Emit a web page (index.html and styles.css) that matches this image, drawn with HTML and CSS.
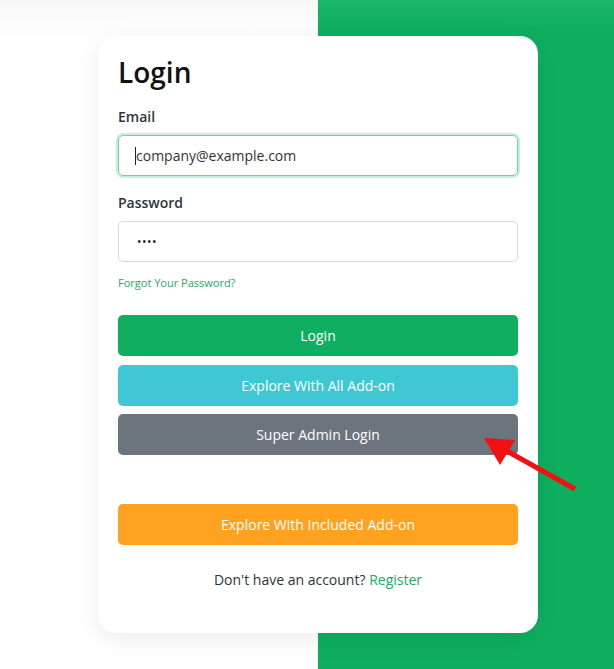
FILE: index.html
```html
<!DOCTYPE html>
<html>
<head>
<meta charset="utf-8">
<link rel="stylesheet" href="styles.css">
</head>
<body>
<div class="page">
  <div class="bg-left"></div>
  <div class="bg-right"></div>
  <div class="card">
    <h1 class="title">Login</h1>
    <label class="label">Email</label>
    <div class="input focus"><span class="caret"></span>company@example.com</div>
    <label class="label pw">Password</label>
    <div class="input dots">••••</div>
    <a class="forgot">Forgot Your Password?</a>
    <div class="buttons">
      <div class="btn green">Login</div>
      <div class="btn cyan">Explore With All Add-on</div>
      <div class="btn gray">Super Admin Login</div>
      <div class="btn orange">Explore With Included Add-on</div>
    </div>
    <p class="register">Don't have an account? <a>Register</a></p>
  </div>
  <svg class="arrow" width="614" height="669" viewBox="0 0 614 669">
    <line x1="575" y1="489" x2="505" y2="450" stroke="#f21010" stroke-width="5"/>
    <polygon points="484,438 515,440 500,465" fill="#f21010"/>
  </svg>
</div>
</body>
</html>
```
FILE: styles.css
```css
* { box-sizing: border-box; }
html, body { margin: 0; padding: 0; }
body { font-family: "Open Sans", "Noto Sans", sans-serif; }
.page { position: relative; width: 614px; height: 669px; overflow: hidden; display: flex; }
.bg-left { width: 318px; background: linear-gradient(#f7f7f7, #ffffff 40px); }
.bg-right { flex: 1; background: linear-gradient(#1cb66b, #0eae5f 30px); }
.card {
  position: absolute; left: 98px; top: 36px; width: 440px; height: 597px;
  background: #fff; border-radius: 18px; padding: 14px 20px 0;
  box-shadow: 0 6px 24px rgba(0,0,0,0.08);
}
.title { margin: 0; font-size: 28px; font-weight: 600; color: #111; line-height: 44px; }
.label { display: block; font-size: 14px; font-weight: 600; color: #2d3540; margin-top: 13px; line-height: 19px; }
.label.pw { margin-top: 17px; }
.input {
  margin-top: 9px; height: 41px; border: 1px solid #d6d9dd; border-radius: 5px;
  font-size: 14px; color: #333; padding: 0 16px; display: flex; align-items: center;
}
.input.focus { border-color: #6fd19c; box-shadow: 0 0 0 2px #c9eed9; padding-left: 16px; }
.caret { display: inline-block; width: 1px; height: 18px; background: #222; margin-right: 0; }
.dots { font-size: 12px; letter-spacing: 0.5px; color: #222; padding-left: 18px; }
.forgot { display: block; margin-top: 13px; font-size: 11px; color: #24a766; line-height: 15px; }
.buttons { margin-top: 25px; display: flex; flex-direction: column; gap: 8.5px; }
.btn {
  height: 41px; border-radius: 5px; color: #fff; font-size: 14px;
  display: flex; align-items: center; justify-content: center;
}
.green { background: #0fae60; }
.cyan { background: #3fc7d3; }
.gray { background: #6c757d; }
.orange { background: #ffa21f; margin-top: 40px; }
.register { margin: 25px 0 0; text-align: center; font-size: 14px; color: #2d3540; }
.register a { color: #24a766; }
.arrow { position: absolute; left: 0; top: 0; pointer-events: none; }
```
